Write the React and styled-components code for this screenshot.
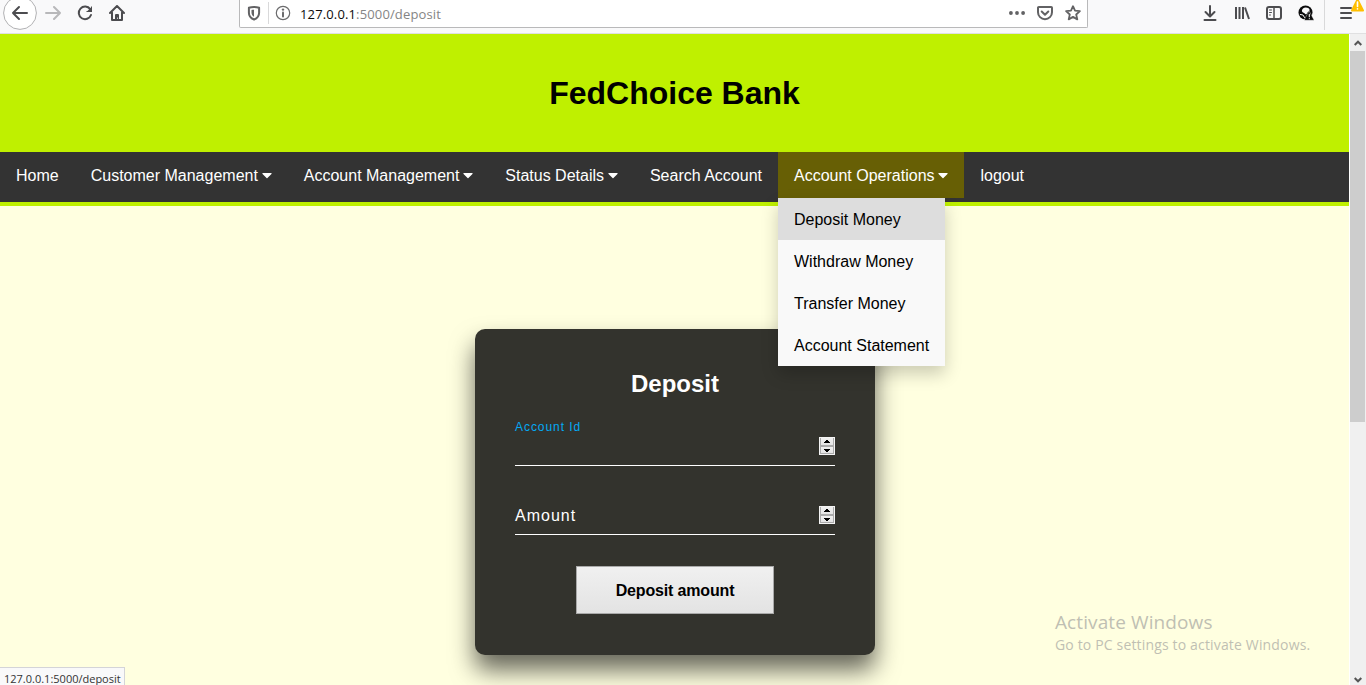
import React from "react";
import styled, { createGlobalStyle } from "styled-components";

const LIME = "#bff000";
const UI_FONT = '"Open Sans", "Noto Sans", sans-serif';

const GlobalStyle = createGlobalStyle`
  *, *::before, *::after { box-sizing: border-box; }
  body { margin: 0; overflow: hidden; }
  svg { display: block; flex: none; }
`;

const Window = styled.div`
  position: relative;
  display: flex;
  flex-direction: column;
  width: 1366px;
  height: 685px;
  overflow: hidden;
  font-family: "Liberation Sans", Arial, sans-serif;
  font-size: 16px;
`;

/* Browser toolbar */
const Toolbar = styled.div`
  display: flex;
  align-items: flex-start;
  flex: none;
  height: 34px;
  background: #f9f9fa;
  border-bottom: 1px solid #e0e0e1;
`;

const NavButtons = styled.div`
  display: flex;
  width: 239px;
  padding-left: 3px;
`;

const Slot = styled.div`
  display: flex;
  justify-content: center;
  width: ${(p) => p.$w || 32}px;
  padding-top: ${(p) => p.$top ?? 5}px;
`;

const UrlBar = styled.div`
  display: flex;
  width: 849px;
  height: 28px;
  background: #fff;
  border: 1px solid #b9b9ba;
  border-top: 0;
  border-radius: 0 0 2px 2px;
`;

const Divider = styled.div`
  width: 1px;
  height: ${(p) => p.$h}px;
  margin-top: ${(p) => p.$top || 0}px;
  background: #d9d9da;
`;

const Url = styled.div`
  flex: 1;
  padding-left: 3px;
  font: 13px/28px ${UI_FONT};
  letter-spacing: 0.14px;
  color: #858585;
  white-space: nowrap;
`;

const Host = styled.span`
  color: #0c0c0d;
`;

const Tools = styled.div`
  display: flex;
  margin-left: auto;
`;

const MenuSlot = styled.div`
  position: relative;
  width: 40px;
  padding: 5px 0 0 13px;
`;

const Alert = styled.div`
  position: absolute;
  top: -2px;
  left: 25px;
`;

/* Page */
const Viewport = styled.div`
  display: flex;
  flex: 1;
  min-height: 0;
`;

const Page = styled.div`
  display: flex;
  flex-direction: column;
  width: 1349px;
  background: #ffffe0;
`;

const Banner = styled.header`
  display: flex;
  justify-content: center;
  align-items: center;
  flex: none;
  height: 118px;
  background: ${LIME};
`;

const BankName = styled.h1`
  margin: 0;
  font-size: 32px;
  line-height: 36px;
`;

const NavBar = styled.nav`
  display: flex;
  align-items: flex-start;
  flex: none;
  height: 54px;
  background: #333;
  border-bottom: 4px solid ${LIME};
`;

const NavItem = styled.div`
  position: relative;
  z-index: 2;
  display: flex;
  gap: 3.9px;
  height: 46px;
  padding: 15px 16px 13px;
  line-height: 18px;
  color: #fff;
  background: ${(p) => (p.$active ? "#675f05" : "transparent")};
  white-space: nowrap;
`;

const Dropdown = styled.div`
  position: absolute;
  top: 46px;
  left: 0;
  width: 167px;
  background: #f9f9f9;
  box-shadow: 0 8px 16px rgba(0, 0, 0, 0.2);
`;

const DropdownItem = styled.div`
  height: 42px;
  padding: 13px 16px 11px;
  line-height: 18px;
  color: #000;
  background: ${(p) => (p.$hovered ? "#ddd" : "transparent")};
`;

const Main = styled.main`
  display: flex;
  justify-content: center;
  align-items: flex-start;
  flex: 1;
  min-height: 0;
  padding: 123px 0 0 1px;
`;

const Card = styled.form`
  display: flex;
  flex-direction: column;
  width: 400px;
  height: 326px;
  padding: 41px 40px 40px;
  background: #33332d;
  border-radius: 10px;
  box-shadow: 0 15px 25px rgba(0, 0, 0, 0.6);
`;

const CardTitle = styled.h2`
  margin: 0 0 29px;
  font-size: 24px;
  line-height: 28px;
  text-align: center;
  color: #fff;
`;

const Field = styled.div`
  position: relative;
  display: flex;
  justify-content: space-between;
  height: 39px;
  margin-bottom: 30px;
  padding: 10px 0;
  border-bottom: 1px solid #fff;
`;

const Label = styled.label`
  font-size: 16px;
  line-height: 20px;
  letter-spacing: 1px;
  color: #fff;
`;

const FloatingLabel = styled(Label)`
  position: absolute;
  top: -10px;
  left: 0;
  font-size: 12px;
  letter-spacing: 0.95px;
  color: #03a9f4;
`;

const Spinner = styled.div`
  display: flex;
  flex-direction: column;
  width: 16px;
  height: 18px;
  margin-left: auto;
  padding: 1px;
  background: #f4f4f4;
`;

const SpinButton = styled.div`
  display: flex;
  justify-content: center;
  align-items: center;
  height: 8px;
  padding-right: 1px;
  border: 1px solid #ababab;
  border-top-width: ${(p) => (p.$up ? 0 : 1)}px;
  background: linear-gradient(#f0f0f0, #e5e5e5);
`;

const Submit = styled.button`
  align-self: center;
  width: 198px;
  height: 48px;
  margin-top: 1px;
  padding: 2px 0 0;
  font: bold 16px "Liberation Sans", Arial, sans-serif;
  letter-spacing: -0.16px;
  color: #000;
  background: linear-gradient(#f0f0f0, #e3e3e3);
  border: 1px solid #a9a9a9;
`;

const Scrollbar = styled.div`
  display: flex;
  flex-direction: column;
  align-items: center;
  width: 17px;
  background: #f0f0f0;
  border-left: 1px solid #fff;
`;

const ScrollArrow = styled.div`
  display: flex;
  justify-content: center;
  align-items: center;
  height: 17px;
  padding-top: ${(p) => p.$shift || 0}px;
`;

const ScrollThumb = styled.div`
  width: 15px;
  height: 371px;
  margin-bottom: auto;
  margin-right: 1px;
  background: #cdcdcd;
`;

/* Overlays */
const StatusTip = styled.div`
  position: absolute;
  left: 0;
  bottom: 0;
  width: 125px;
  height: 18px;
  padding-left: 4px;
  font: 11px/21px ${UI_FONT};
  color: #333;
  background: #f9f9fa;
  border: 1px solid #d4d4d8;
  border-width: 1px 1px 0 0;
  white-space: nowrap;
`;

const Watermark = styled.div`
  position: absolute;
  left: 1055px;
  top: 609px;
  font-family: ${UI_FONT};
  color: #bfbfb3;
  white-space: nowrap;
`;

const WatermarkTitle = styled.div`
  font-size: 19px;
  line-height: 26px;
  letter-spacing: 0.1px;
`;

const WatermarkText = styled.div`
  font-size: 14px;
  line-height: 20px;
  letter-spacing: 0.16px;
`;

const Icon = ({ size = 16, children, color = "#4c4c4f", width = 2 }) => (
  <svg width={size} height={size} viewBox="0 0 16 16" fill="none" stroke={color}
    strokeWidth={width} strokeLinecap="round" strokeLinejoin="round">
    {children}
  </svg>
);

const Caret = () => (
  <svg width="10" height="16" viewBox="0 0 320 512" fill="#fff">
    <path d="M31.3 192h257.3c17.8 0 26.7 21.5 14.1 34.1L174.1 354.8c-7.8 7.8-20.5 7.8-28.3 0L17.2 226.1C4.6 213.5 13.5 192 31.3 192z" />
  </svg>
);

const NumberSpinner = () => (
  <Spinner>
    <SpinButton $up>
      <svg width="6" height="3" viewBox="0 0 6 3" shapeRendering="crispEdges"><path d="M2 0h2v1h1v1h1v1H0V2h1V1h1z" /></svg>
    </SpinButton>
    <SpinButton>
      <svg width="6" height="3" viewBox="0 0 6 3" shapeRendering="crispEdges"><path d="M0 0h6v1H5v1H4v1H2V2H1V1H0z" /></svg>
    </SpinButton>
  </Spinner>
);

const NAV = [
  { text: "Home" },
  { text: "Customer Management", menu: true },
  { text: "Account Management", menu: true },
  { text: "Status Details", menu: true },
  { text: "Search Account" },
  {
    text: "Account Operations",
    menu: true,
    items: ["Deposit Money", "Withdraw Money", "Transfer Money", "Account Statement"],
  },
  { text: "logout" },
];

const BrowserToolbar = () => (
  <Toolbar>
    <NavButtons>
      <Slot $w={34} $top={0}>
        <svg width="34" height="32" viewBox="0 0 34 32" fill="none">
          <circle cx="17" cy="13" r="16.4" fill="#fff" stroke="#b1b1b3" />
          <path d="M24 13H10M16 7l-6 6 6 6" stroke="#4c4c4f" strokeWidth="2" strokeLinecap="round" strokeLinejoin="round" />
        </svg>
      </Slot>
      <Slot><Icon color="#b8b8ba"><path d="M1 8h14M9 2l6 6-6 6" /></Icon></Slot>
      <Slot>
        <Icon>
          <path d="M13.2 4.2A6.3 6.3 0 1 0 14 10" />
          <path d="M15 1.4v5.6H9.4z" fill="#4c4c4f" stroke="none" />
          <path d="M14.5 2v4.5H10" strokeWidth="1" />
        </Icon>
      </Slot>
      <Slot>
        <Icon>
          <path d="M1 8l7-7 7 7M3 7.5V15h10V7.5" />
          <path d="M6 15V10a1 1 0 0 1 1-1h2a1 1 0 0 1 1 1v5H8.7v-2.5H8V15z" fill="#4c4c4f" stroke="none" />
        </Icon>
      </Slot>
    </NavButtons>
    <UrlBar>
      <Slot $w={28}>
        <Icon color="#626264">
          <path d="M8 1.9c-2 0-3.800.35-5.100.8v5c0 3.300 2 5.600 5.100 6.800 3.100-1.200 5.100-3.500 5.100-6.800v-5C11.800 2.250 10 1.900 8 1.900z" />
          <path d="M8 4.700v7C6.300 10.800 5.500 9.500 5.500 7.500V5c.8-.2 1.600-.3 2.500-.3z" fill="#626264" stroke="none" />
        </Icon>
      </Slot>
      <Divider $h={22} $top={2} />
      <Slot $w={28}>
        <Icon color="#6b6b6d" width={1.2}>
          <circle cx="8" cy="8" r="6.7" />
          <path d="M8 7.500v4" strokeWidth="2" />
          <circle cx="8" cy="4.600" r="1.200" fill="#6b6b6d" stroke="none" />
        </Icon>
      </Slot>
      <Url><Host>127.0.0.1</Host>:5000/deposit</Url>
      <Slot $w={28}>
        <Icon>
          <g fill="#626264" stroke="none"><circle cx="1.900" cy="8" r="1.900" /><circle cx="8" cy="8" r="1.900" /><circle cx="14.100" cy="8" r="1.900" /></g>
        </Icon>
      </Slot>
      <Slot $w={28}>
        <Icon color="#626264"><path d="M1.800 2h12.400a.8.8 0 0 1 .8.800v4.400a7 7 0 0 1-14 0V2.800a.8.8 0 0 1 .8-.8zM4.700 6.500L8 9.700l3.300-3.200" /></Icon>
      </Slot>
      <Slot $w={28}>
        <Icon color="#626264" width={1.8}><path d="M8 1.200l2 4.500 4.900.5-3.700 3.300 1.100 4.900L8 11.900l-4.300 2.500 1.100-4.900L1.100 6.200 6 5.700z" /></Icon>
      </Slot>
    </UrlBar>
    <Tools>
      <Slot><Icon><path d="M8 1v10M3.500 7L8 11.500 12.500 7M2.500 15h11" /></Icon></Slot>
      <Slot>
        <Icon><path d="M2 2v12M5.500 2v12M9 2v12M11 2.500l4 11.500" strokeWidth="2" strokeLinecap="butt" /></Icon>
      </Slot>
      <Slot>
        <Icon><rect x="1" y="2" width="14" height="12" rx="2" /><path d="M8 2v12" strokeWidth="1.500" /><path d="M3.500 5h2M3.500 7.500h2M3.500 10h1" strokeWidth="1" /></Icon>
      </Slot>
      <Slot>
        <Icon color="#0c0c0d">
          <circle cx="7.500" cy="7.500" r="7" fill="#0c0c0d" stroke="none" />
          <path d="M5 3.500c2-1.700 6-1 6.600 1.300.2 1.200-.9 1.400-1.800 2.200-.7.900-.8 2.400-2 2.300-1.200-.3-1-1.300-2.300-1.600C3.500 7.200 3.400 5 5 3.500z" fill="#f9f9fa" stroke="none" />
          <path d="M2.300 9.500l2.700.5 1.500 2.500" stroke="#f9f9fa" strokeWidth="1" />
          <path d="M11.300 6.200l4.900 9.100H6.400z" fill="#0c0c0d" stroke="#f9f9fa" strokeWidth=".4" />
          <path d="M11.300 9.400v2.300M11.300 13.500v.1" stroke="#f9f9fa" strokeWidth="1.100" />
        </Icon>
      </Slot>
      <Slot $w={4} $top={0}><Divider $h={30} /></Slot>
      <MenuSlot>
        <Icon><path d="M2 3h10M2 8h10M2 13h10" /></Icon>
        <Alert>
          <svg width="13" height="14" viewBox="0 0 13 14">
            <path d="M6.500 1.500L12 12.500H1z" fill="#ffbf00" stroke="#ffbf00" strokeWidth="2" strokeLinejoin="round" />
            <path d="M6.500 4v4.500M6.500 10.700v.3" stroke="#fff" strokeWidth="1.600" strokeLinecap="round" />
          </svg>
        </Alert>
      </MenuSlot>
    </Tools>
  </Toolbar>
);

export default function App() {
  return (
    <>
      <GlobalStyle />
      <Window>
        <BrowserToolbar />
        <Viewport>
          <Page>
            <Banner><BankName>FedChoice Bank</BankName></Banner>
            <NavBar>
              {NAV.map(({ text, menu, items }) => (
                <NavItem key={text} $active={!!items}>
                  <span>{text}</span>
                  {menu && <Caret />}
                  {items && (
                    <Dropdown>
                      {items.map((item, i) => (
                        <DropdownItem key={item} $hovered={i === 0}>{item}</DropdownItem>
                      ))}
                    </Dropdown>
                  )}
                </NavItem>
              ))}
            </NavBar>
            <Main>
              <Card>
                <CardTitle>Deposit</CardTitle>
                <Field><FloatingLabel>Account Id</FloatingLabel><NumberSpinner /></Field>
                <Field><Label>Amount</Label><NumberSpinner /></Field>
                <Submit type="button">Deposit amount</Submit>
              </Card>
            </Main>
          </Page>
          <Scrollbar>
            <ScrollArrow>
              <svg width="8" height="6" viewBox="0 0 8 6" fill="none" stroke="#555" strokeWidth="2"><path d="M.7 5L4 1.700 7.300 5" /></svg>
            </ScrollArrow>
            <ScrollThumb />
            <ScrollArrow $shift={6}>
              <svg width="8" height="6" viewBox="0 0 8 6" fill="none" stroke="#555" strokeWidth="2"><path d="M.7 1L4 4.300 7.300 1" /></svg>
            </ScrollArrow>
          </Scrollbar>
        </Viewport>
        <Watermark>
          <WatermarkTitle>Activate Windows</WatermarkTitle>
          <WatermarkText>Go to PC settings to activate Windows.</WatermarkText>
        </Watermark>
        <StatusTip>127.0.0.1:5000/deposit</StatusTip>
      </Window>
    </>
  );
}
